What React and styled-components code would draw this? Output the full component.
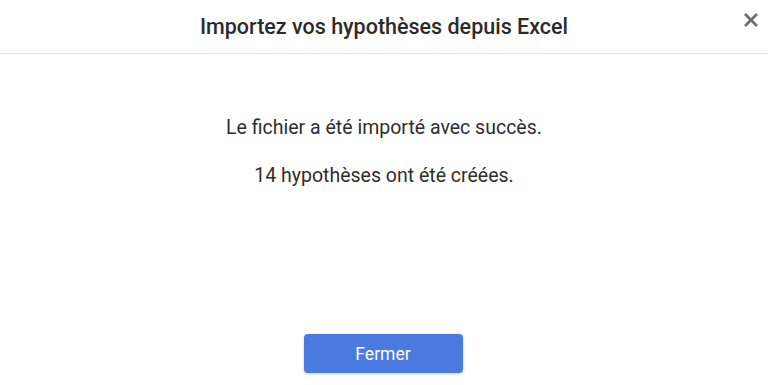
import React from "react";
import styled, { createGlobalStyle } from "styled-components";

const GlobalStyle = createGlobalStyle`
  html, body {
    margin: 0;
    padding: 0;
    background: #ffffff;
    font-family: Roboto, "Noto Sans", sans-serif;
  }
`;

const Modal = styled.div`
  width: 768px;
  height: 385px;
  display: flex;
  flex-direction: column;
  background: #fff;
  box-sizing: border-box;
`;

const Header = styled.div`
  position: relative;
  height: 54px;
  display: flex;
  align-items: center;
  justify-content: center;
  border-bottom: 1px solid #e6e6e6;
  box-sizing: border-box;
`;

const Title = styled.h2`
  margin: 0;
  font-size: 21.5px;
  font-weight: 500;
  color: #2b2b2b;
`;

const CloseButton = styled.button`
  position: absolute;
  right: 5px;
  top: 8px;
  width: 24px;
  height: 24px;
  padding: 0;
  border: none;
  background: none;
  display: flex;
  align-items: center;
  justify-content: center;
  cursor: pointer;
`;

const Body = styled.div`
  flex: 1;
  display: flex;
  flex-direction: column;
  align-items: center;
  padding-top: 62px;
  gap: 25px;
`;

const Message = styled.p`
  margin: 0;
  font-size: 19.5px;
  line-height: 23px;
  color: #2e2e2e;
`;

const Footer = styled.div`
  display: flex;
  justify-content: center;
  padding-bottom: 12px;
  padding-right: 2px;
`;

const PrimaryButton = styled.button`
  width: 159px;
  height: 39px;
  border: none;
  border-radius: 4px;
  background: #4a7ae0;
  color: #fff;
  font-family: Roboto, sans-serif;
  font-size: 17.5px;
  font-weight: 400;
  box-shadow: 0 1px 3px rgba(0, 0, 0, 0.2);
  cursor: pointer;
`;

const App = () => (
  <>
    <GlobalStyle />
    <Modal>
      <Header>
        <Title>Importez vos hypothèses depuis Excel</Title>
        <CloseButton aria-label="Fermer">
          <svg width="16" height="16" viewBox="0 0 16 16">
            <path
              d="M2 2 L14 14 M14 2 L2 14"
              stroke="#6b6b6b"
              strokeWidth="2.6"
              strokeLinecap="butt"
            />
          </svg>
        </CloseButton>
      </Header>
      <Body>
        <Message>Le fichier a été importé avec succès.</Message>
        <Message>14 hypothèses ont été créées.</Message>
      </Body>
      <Footer>
        <PrimaryButton>Fermer</PrimaryButton>
      </Footer>
    </Modal>
  </>
);

export default App;
